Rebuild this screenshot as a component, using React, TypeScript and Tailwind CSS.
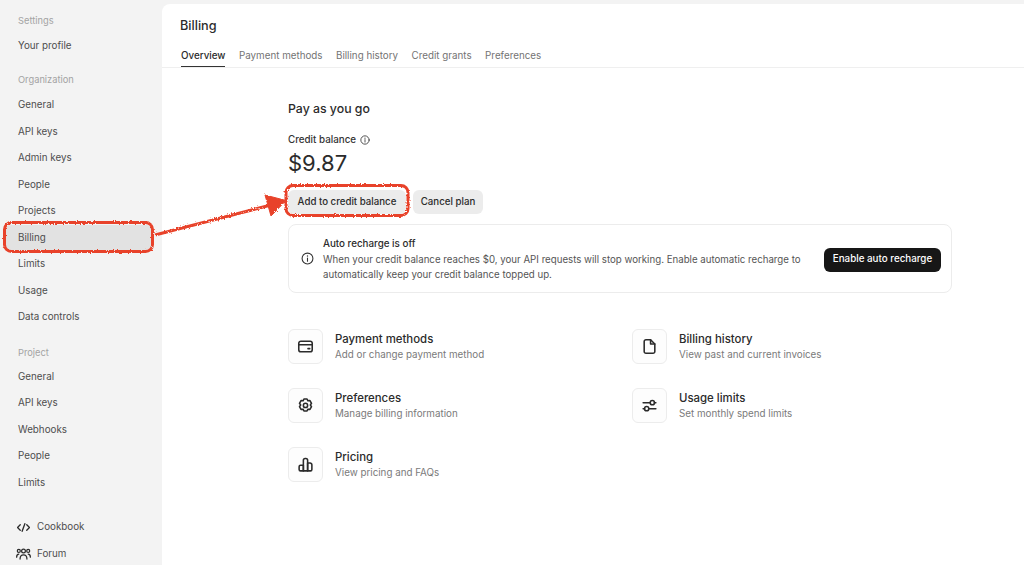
const font = { fontFamily: "Inter, 'Noto Sans', sans-serif" };

const tabs = ["Overview", "Payment methods", "Billing history", "Credit grants", "Preferences"];

function SideItem({ label }: { label: string }) {
  return <div className="flex h-[26.5px] items-center text-[9.8px] text-[#4d4d4d]">{label}</div>;
}

function SideHeading({ label }: { label: string }) {
  return <div className="flex h-[22px] items-center text-[9.3px] text-[#a3a3a3]">{label}</div>;
}

function InfoIcon({ size }: { size: number }) {
  return (
    <svg width={size} height={size} viewBox="0 0 24 24" fill="none" stroke="#333" strokeWidth="2" strokeLinecap="round">
      <circle cx="12" cy="12" r="10" />
      <path d="M12 11v6" />
      <path d="M12 7.5v.01" strokeWidth="2.6" />
    </svg>
  );
}

const iconProps = {
  width: 17,
  height: 17,
  viewBox: "0 0 24 24",
  fill: "none",
  stroke: "#2b2b2b",
  strokeWidth: 2.2,
  strokeLinecap: "round" as const,
  strokeLinejoin: "round" as const,
};

function CardIcon() {
  return (
    <svg {...iconProps}>
      <rect x="2.5" y="4.5" width="19" height="15" rx="3" />
      <path d="M2.5 9.5h19" />
      <path d="M15.5 15h2.5" />
    </svg>
  );
}

function FileIcon() {
  return (
    <svg {...iconProps}>
      <path d="M7 2.5h6.5l6 6V19a2.5 2.5 0 0 1-2.5 2.5H7A2.5 2.5 0 0 1 4.5 19V5A2.5 2.5 0 0 1 7 2.5z" />
      <path d="M13.5 2.5v6h6" />
    </svg>
  );
}

function GearIcon() {
  return (
    <svg {...iconProps}>
      <path d="M9.8 2.8h4.4l1.2 2.6 2.9-.3 2.2 3.800-1.700 2.400 1.700 2.400-2.200 3.800-2.900-.3-1.200 2.600H9.8l-1.200-2.600-2.900.3-2.200-3.800 1.700-2.400-1.700-2.400 2.200-3.800 2.900.3z" />
      <circle cx="12" cy="11.9" r="3" />
    </svg>
  );
}

function SlidersIcon() {
  return (
    <svg {...iconProps}>
      <path d="M3 8h10" />
      <circle cx="16" cy="8" r="3" />
      <path d="M19 8h2" />
      <path d="M21 16.5H11" />
      <circle cx="8" cy="16.5" r="3" />
      <path d="M5 16.5H3" />
    </svg>
  );
}

function BarsIcon() {
  return (
    <svg {...iconProps}>
      <path d="M9 21V13H5a2 2 0 0 0-2 2v4a2 2 0 0 0 2 2z" />
      <path d="M9 21V6a2.5 2.5 0 0 1 2.5-2.5h1A2.5 2.5 0 0 1 15 6v15z" />
      <path d="M15 21V10h3.5a2.5 2.5 0 0 1 2.5 2.5V19a2 2 0 0 1-2 2z" />
    </svg>
  );
}

function LinkRow({ icon, title, sub }: { icon: React.ReactNode; title: string; sub: string }) {
  return (
    <div className="flex items-center gap-3">
      <div className="flex h-[35px] w-[35px] items-center justify-center rounded-md border border-[#ececec] bg-[#fdfdfd]">
        {icon}
      </div>
      <div>
        <div className="text-[11.4px] leading-[16px] font-medium text-[#2b2b2b]">{title}</div>
        <div className="text-[9.8px] leading-[16px] text-[#7a7a7a]">{sub}</div>
      </div>
    </div>
  );
}

function Annotations() {
  return (
    <svg className="pointer-events-none absolute top-0 left-0" width="1024" height="565" fill="none">
      <defs>
        <filter id="rough" x="-5%" y="-20%" width="110%" height="140%">
          <feTurbulence type="fractalNoise" baseFrequency="0.7" numOctaves="2" seed="3" />
          <feDisplacementMap in="SourceGraphic" scale="3" />
        </filter>
      </defs>
      <g filter="url(#rough)" stroke="#e8432a" strokeLinejoin="round">
        <rect x="4.5" y="222.5" width="148" height="29" rx="7" strokeWidth="3" />
        <rect x="286" y="185.5" width="122" height="30" rx="7" strokeWidth="3" />
        <path d="M155 235 L271 205" strokeWidth="3" />
        <path d="M265 195 L286 200.5 L271 216 Z" fill="#e8432a" strokeWidth="1" />
      </g>
    </svg>
  );
}

export default function App() {
  return (
    <div className="relative flex h-[565px] w-full overflow-hidden bg-[#f3f3f3]" style={font}>
      <aside className="w-[162px] shrink-0 pt-[9.5px]">
        <div className="pl-[18px]">
          <SideHeading label="Settings" />
          <div className="mt-[2px]">
            <SideItem label="Your profile" />
          </div>
        </div>
        <div className="mt-[8.5px] pl-[18px]">
          <SideHeading label="Organization" />
          <div className="mt-[2px]">
            {["General", "API keys", "Admin keys", "People", "Projects"].map((l) => (
              <SideItem key={l} label={l} />
            ))}
          </div>
        </div>
        <div className="ml-[5px] w-[148px] rounded-md bg-[#e2e2e2] pl-[13px]">
          <SideItem label="Billing" />
        </div>
        <div className="pl-[18px]">
          {["Limits", "Usage", "Data controls"].map((l) => (
            <SideItem key={l} label={l} />
          ))}
        </div>
        <div className="mt-[11px] pl-[18px]">
          <SideHeading label="Project" />
          {["General", "API keys", "Webhooks", "People", "Limits"].map((l) => (
            <SideItem key={l} label={l} />
          ))}
        </div>
        <div className="mt-[18px] pl-[17px]">
          <div className="flex h-[26.5px] items-center gap-[7px] text-[9.8px] text-[#4d4d4d]">
            <svg width="13" height="13" viewBox="0 0 24 24" fill="none" stroke="#2b2b2b" strokeWidth="2.4" strokeLinecap="round" strokeLinejoin="round">
              <path d="M6 7l-5 5 5 5" />
              <path d="M18 7l5 5-5 5" />
              <path d="M14.5 5l-5 14" />
            </svg>
            Cookbook
          </div>
          <div className="-ml-px flex h-[26.5px] items-center gap-[6px] text-[9.8px] text-[#4d4d4d]">
            <svg width="15" height="14" viewBox="0 0 24 22" fill="none" stroke="#2b2b2b" strokeWidth="2" strokeLinecap="round" strokeLinejoin="round">
              <circle cx="12" cy="6" r="3" />
              <circle cx="4.5" cy="6" r="2.4" />
              <circle cx="19.5" cy="6" r="2.4" />
              <path d="M6.5 19c0-4 2-6.5 5.5-6.5s5.5 2.5 5.5 6.5" />
              <path d="M1 16c0-3 1-5 3.5-5" />
              <path d="M23 16c0-3-1-5-3.5-5" />
            </svg>
            Forum
          </div>
        </div>
      </aside>

      <main className="mt-1 flex-1 rounded-tl-lg bg-white">
        <header className="border-b border-[#efefef]">
          <h1 className="pt-[13px] pl-[18px] text-[12.7px] leading-[18px] font-medium text-[#2b2b2b]">Billing</h1>
          <nav className="mt-[13px] flex gap-[13.5px] pl-[19px]">
            {tabs.map((t, i) => (
              <div
                key={t}
                className={
                  i === 0
                    ? "border-b border-[#333] pb-[3px] text-[9.8px] leading-[15px] font-medium text-[#2b2b2b]"
                    : "pb-[3px] text-[9.8px] leading-[15px] text-[#737373]"
                }
              >
                {t}
              </div>
            ))}
          </nav>
        </header>

        <section className="ml-[126px] w-[664px] pt-[31px]">
          <h2 className="text-[12.3px] leading-[20px] font-medium text-[#2b2b2b]">Pay as you go</h2>
          <div className="mt-[13px] flex items-center gap-[4px] text-[9.8px] leading-[16px] font-medium text-[#333]">
            Credit balance
            <InfoIcon size={10} />
          </div>
          <div className="text-[22px] leading-[30px] text-[#2b2b2b]">$9.87</div>
          <div className="mt-[12px] flex gap-[5px]">
            <button type="button" className="h-[24px] w-[118px] rounded-md bg-[#ececec] text-[9.7px] font-medium text-[#2b2b2b]">
              Add to credit balance
            </button>
            <button type="button" className="ml-[2px] h-[24px] w-[70px] rounded-md bg-[#ececec] text-[9.7px] font-medium text-[#2b2b2b]">
              Cancel plan
            </button>
          </div>
          <div className="relative mt-[10px] flex h-[69px] items-center rounded-lg border border-[#ececec] pr-[10px] pl-[12px]">
            <InfoIcon size={13} />
            <div className="ml-[9px] w-[490px]">
              <div className="text-[9.8px] leading-[15px] font-medium text-[#2b2b2b]">Auto recharge is off</div>
              <div className="mt-[1px] text-[9.7px] leading-[15px] text-[#555]">
                When your credit balance reaches $0, your API requests will stop working. Enable automatic recharge to automatically keep your credit balance topped up.
              </div>
            </div>
            <button type="button" className="mt-[2px] ml-auto h-[24px] w-[117px] rounded-md bg-[#171717] text-[9.8px] font-medium text-white">
              Enable auto recharge
            </button>
          </div>
          <div className="mt-[36px] grid grid-cols-[344px_1fr] gap-y-[24px]">
            <LinkRow icon={<CardIcon />} title="Payment methods" sub="Add or change payment method" />
            <LinkRow icon={<FileIcon />} title="Billing history" sub="View past and current invoices" />
            <LinkRow icon={<GearIcon />} title="Preferences" sub="Manage billing information" />
            <LinkRow icon={<SlidersIcon />} title="Usage limits" sub="Set monthly spend limits" />
            <LinkRow icon={<BarsIcon />} title="Pricing" sub="View pricing and FAQs" />
          </div>
        </section>
      </main>

      <Annotations />
    </div>
  );
}
